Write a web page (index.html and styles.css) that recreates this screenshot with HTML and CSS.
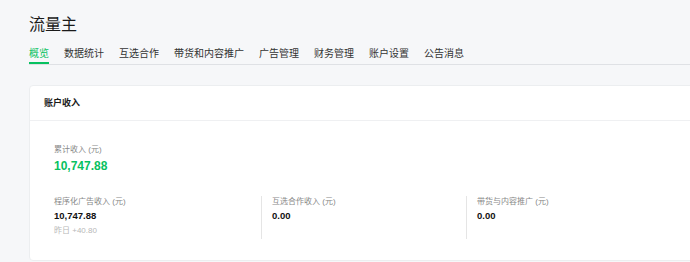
FILE: index.html
```html
<!DOCTYPE html>
<html>
	<head>
		<meta charset="UTF-8" />
		<title>流量主</title>
		<link rel="stylesheet" href="styles.css">
	</head>
	<body>
		<div class="page">
			<h1 class="page-title">流量主</h1>
			<div class="tabs">
				<a class="tab active" href="javascript:void(0);">概览</a>
				<a class="tab" href="javascript:void(0);">数据统计</a>
				<a class="tab" href="javascript:void(0);">互选合作</a>
				<a class="tab" href="javascript:void(0);">带货和内容推广</a>
				<a class="tab" href="javascript:void(0);">广告管理</a>
				<a class="tab" href="javascript:void(0);">财务管理</a>
				<a class="tab" href="javascript:void(0);">账户设置</a>
				<a class="tab" href="javascript:void(0);">公告消息</a>
			</div>
			<div class="card">
				<div class="card-head">账户收入</div>
				<div class="card-body">
					<div class="total">
						<div class="label">累计收入 (元)</div>
						<div class="total-num">10,747.88</div>
					</div>
					<div class="cols">
						<div class="col">
							<div class="label">程序化广告收入 (元)</div>
							<div class="num">10,747.88</div>
							<div class="sub">昨日 +40.80</div>
						</div>
						<div class="col">
							<div class="label">互选合作收入 (元)</div>
							<div class="num">0.00</div>
						</div>
						<div class="col">
							<div class="label">带货与内容推广 (元)</div>
							<div class="num">0.00</div>
						</div>
					</div>
				</div>
			</div>
		</div>
	</body>
</html>
```

FILE: styles.css
```css
* {
	margin: 0;
	padding: 0;
	box-sizing: border-box;
}
html, body {
	overflow: hidden;
}
body {
	background: #f6f7f9;
	font-family: "Liberation Sans", "Noto Sans CJK SC", sans-serif;
	color: #1a1a1a;
}
.page {
	width: 1100px;
	padding-left: 29px;
}
.page-title {
	font-size: 16px;
	font-weight: normal;
	line-height: 22px;
	padding-top: 14px;
	color: #1a1a1a;
}
.tabs {
	display: flex;
	gap: 15px;
	margin-top: 10px;
	border-bottom: 1px solid #dfe1e5;
}
.tab {
	font-size: 10px;
	line-height: 16px;
	color: #333;
	text-decoration: none;
	border-bottom: 2px solid transparent;
}
.tab.active {
	color: #07c160;
	border-bottom-color: #07c160;
}
.card {
	margin-top: 20px;
	background: #fff;
	border: 1px solid #eceef0;
	border-radius: 4px;
}
.card-head {
	height: 35px;
	line-height: 34px;
	padding-left: 14px;
	font-size: 9px;
	font-weight: bold;
	border-bottom: 1px solid #eff0f2;
}
.card-body {
	padding: 23px 0 21px 24px;
}
.label {
	font-size: 8px;
	line-height: 12px;
	color: #888;
}
.total-num {
	font-size: 12px;
	font-weight: bold;
	line-height: 16px;
	margin-top: 2px;
	color: #07c160;
}
.cols {
	display: flex;
	margin-top: 22px;
}
.col {
	width: 205px;
	height: 43px;
	padding-left: 10px;
	border-left: 1px solid #e5e5e5;
}
.col:first-child {
	width: 207px;
	padding-left: 0;
	border-left: none;
}
.num {
	font-size: 9.5px;
	font-weight: bold;
	line-height: 14px;
	margin-top: 1px;
	color: #111;
}
.sub {
	font-size: 8px;
	line-height: 12px;
	margin-top: 2px;
	color: #b8b8b8;
}
```
